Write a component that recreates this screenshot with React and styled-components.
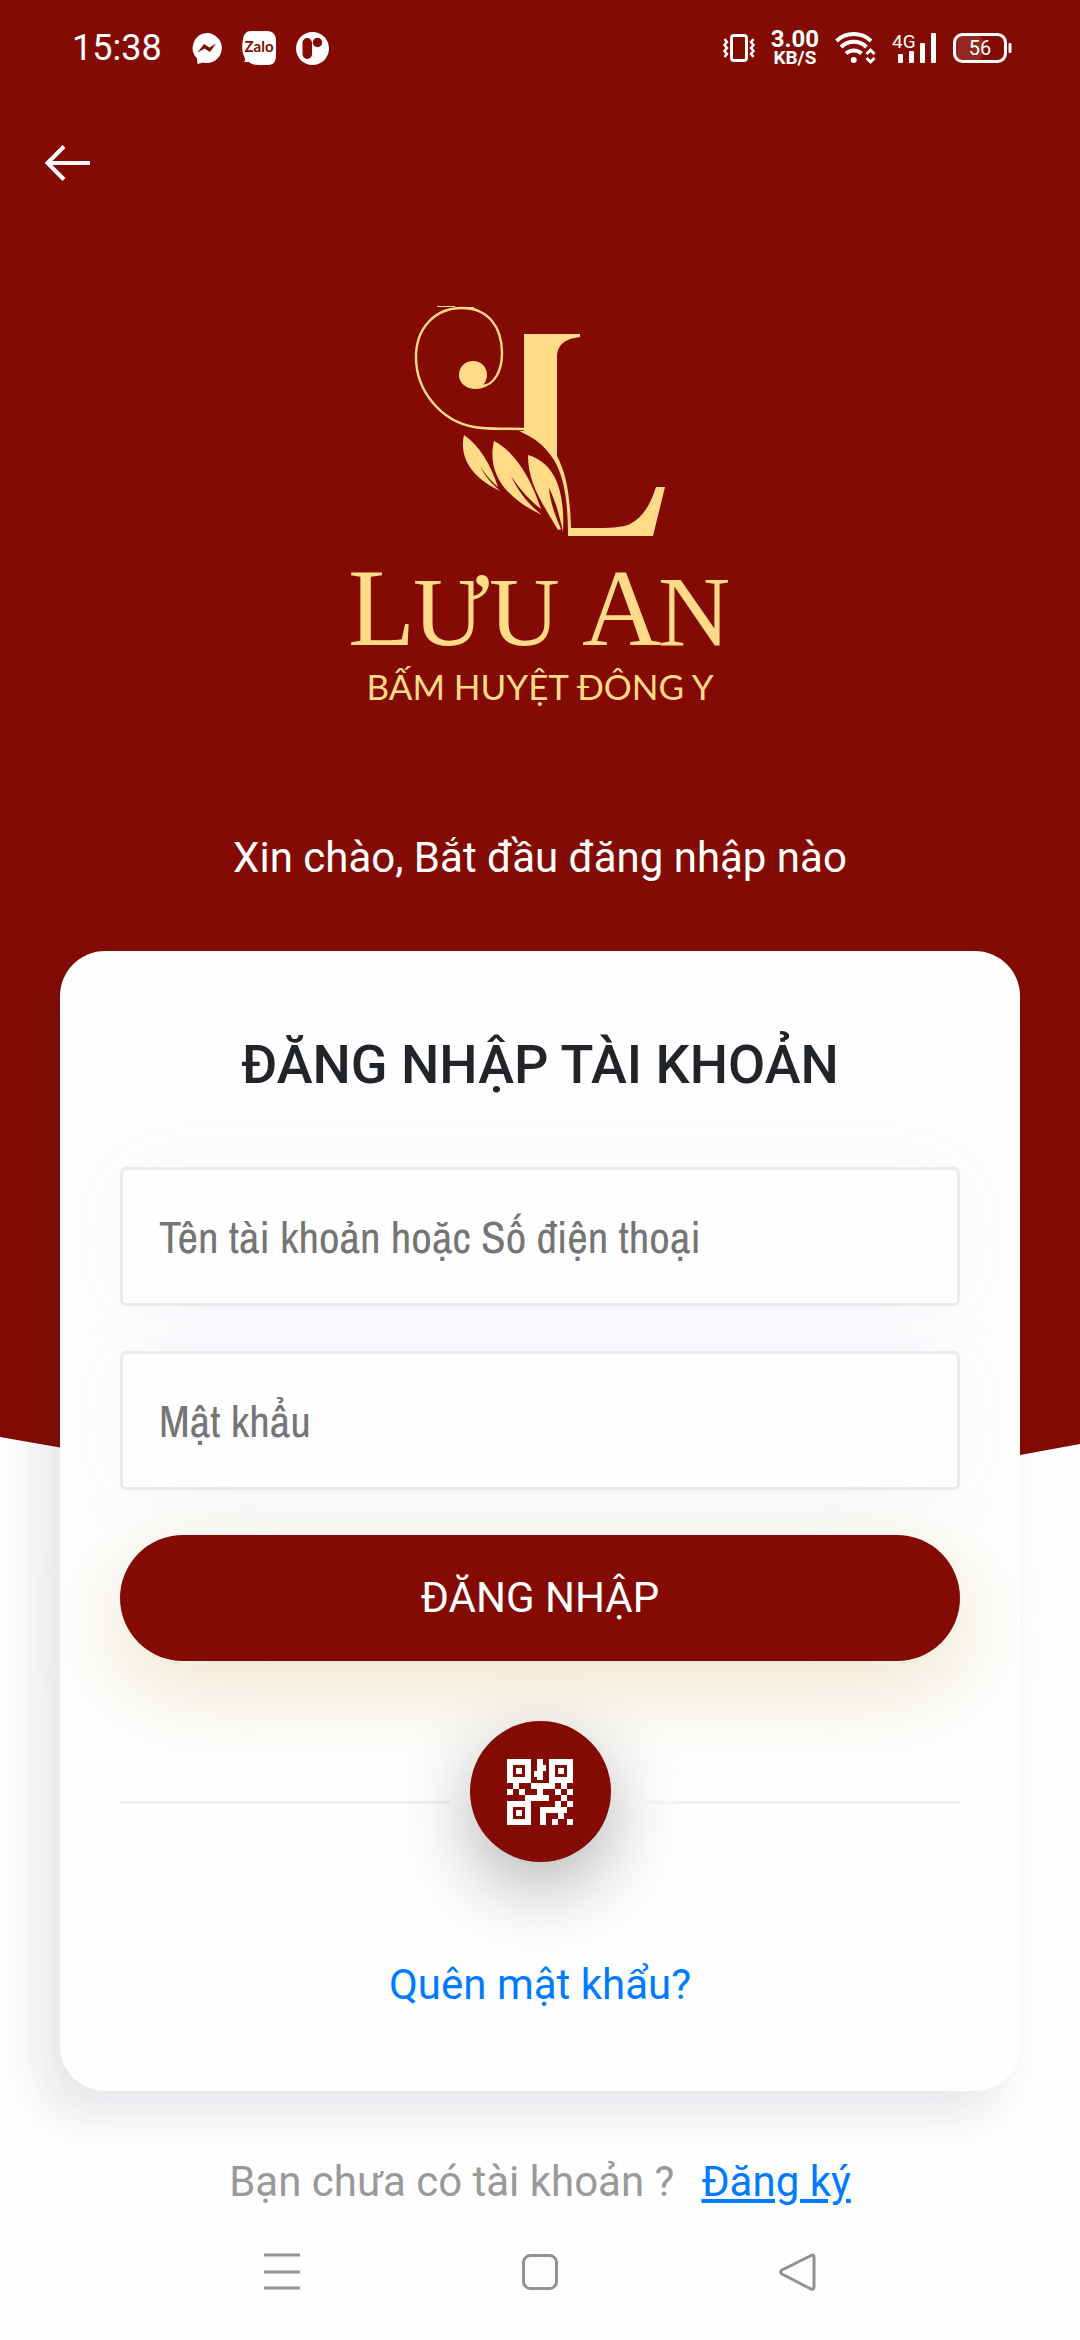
import React from "react";
import styled, { createGlobalStyle } from "styled-components";

const RED = "#830b03";
const GOLD = "#ffdb88";
const BLUE = "#007bff";

const GlobalStyle = createGlobalStyle`
  *, *::before, *::after { box-sizing: border-box; }
  body {
    margin: 0;
    background: #fefefe;
    font-family: Roboto, "Noto Sans", sans-serif;
    color: #212529;
  }
  svg { overflow: visible; }
`;

const Screen = styled.div`
  position: relative;
  z-index: 0;
  min-height: 100vh;
  display: flex;
  flex-direction: column;

  &::before {
    content: "";
    position: absolute;
    z-index: -1;
    inset: 0 0 auto;
    height: 1550px;
    background: ${RED};
    clip-path: polygon(0 0, 100% 0, 100% 1444px, 53% 1537px, 0 1437px);
  }
`;

const StatusBar = styled.div`
  display: flex;
  justify-content: space-between;
  align-items: center;
  height: 96px;
  padding: 0 68px 0 72px;
  color: #fff;
`;

const StatusGroup = styled.div`
  display: flex;
  align-items: center;
  gap: ${(p) => p.$gap}px;
`;

const Clock = styled.time`
  font-size: 36px;
  line-height: 40px;
  margin-right: 10px;
`;

const Speed = styled.div`
  display: flex;
  flex-direction: column;
  align-items: center;
  font-weight: 700;
  font-size: 24px;
  line-height: 20px;
`;

const SpeedUnit = styled.span`
  font-size: 19px;
  line-height: 18px;
`;

const TopBar = styled.header`
  display: flex;
  height: 136px;
  padding: 37px 30px;
`;

const BackButton = styled.button`
  display: flex;
  padding: 12px 15px;
  border: 0;
  background: none;
  height: 60px;
`;

const Brand = styled.div`
  display: flex;
  flex-direction: column;
  align-items: center;
  padding-top: 73px;
  color: ${GOLD};
`;

const Tagline = styled.div`
  font-family: Lato, "Noto Sans", sans-serif;
  font-size: 35px;
  line-height: 48px;
`;

const Greeting = styled.p`
  margin: 121px 0 66px;
  text-align: center;
  font-size: 42px;
  line-height: 54px;
  color: #fff;
`;

const Card = styled.form`
  display: flex;
  flex-direction: column;
  margin: 0 60px;
  padding: 81px 60px 79px;
  border-radius: 45px;
  background: #fefefe;
  box-shadow: -20px 24px 45px rgba(30, 45, 70, 0.11);
`;

const Title = styled.h1`
  margin: 0 0 69px;
  text-align: center;
  font-size: 54px;
  line-height: 66px;
  font-weight: 500;
`;

const Field = styled.input`
  width: 100%;
  height: 139px;
  margin-bottom: 45px;
  padding: 0 36px;
  border: 3px solid #ebebeb;
  border-radius: 6px;
  background: #fefefe;
  box-shadow: 0 0 90px rgba(105, 90, 220, 0.05);
  font-family: "Archivo Narrow", "Liberation Sans Narrow", "Roboto Condensed", Roboto, sans-serif;
  font-size: 45px;
  color: #212529;

  &::placeholder { color: #757575; opacity: 1; }
`;

const Submit = styled.button`
  height: 126px;
  border: 0;
  border-radius: 63px;
  background: ${RED};
  box-shadow: 0 24px 90px rgba(190, 150, 50, 0.26);
  color: #fff;
  font: 400 42px/54px Roboto, sans-serif;
`;

const QrRow = styled.div`
  display: flex;
  align-items: center;
  gap: 20px;
  margin-top: 60px;
`;

const Rule = styled.span`
  flex: 1;
  height: 3px;
  margin-top: 22px;
  background: #f2f2f2;
`;

const QrButton = styled.button`
  display: grid;
  place-items: center;
  width: 141px;
  height: 141px;
  padding: 0;
  border: 0;
  border-radius: 50%;
  background: ${RED};
  box-shadow: 0 24px 75px rgba(0, 0, 0, 0.3);
`;

const Link = styled.a`
  color: ${BLUE};
  text-decoration: ${(p) => (p.$underlined ? "underline" : "none")};
`;

const Forgot = styled.p`
  margin: 96px 0 0;
  text-align: center;
  font-size: 42px;
  line-height: 54px;
`;

const SignUp = styled.p`
  display: flex;
  justify-content: center;
  gap: 27px;
  margin: 64px 0 0;
  font-size: 42px;
  line-height: 54px;
  color: #999;
`;

const NavBar = styled.nav`
  display: flex;
  justify-content: center;
  gap: 216px;
  margin-top: 42px;
  padding-bottom: 42px;
`;

const NavButton = styled.button`
  display: flex;
  padding: 0;
  border: 0;
  background: none;
`;

function Emblem() {
  return (
    <svg width="252" height="232" viewBox="94 15 252 232" fill={GOLD} aria-hidden="true">
      <path d="M204 44h56v3c-16 2-23 8-23 21v98c9 17 13 38 14 72 24 0 49 1 59-4 12-6 20-18 26-37h9l-12 49h-85c0-36-4-59-14-76-10-15-19-22-35-29h5z" />
      <path d="M204 139c-21-1-33 1-50-2-33-6-58-36-58-70 0-28 18-49 46-49 26 0 40 19 40 45 0 18-8 33-21 33" fill="none" stroke={GOLD} strokeWidth="2.4" />
      <path d="M117 16.500h18M140 17.500h14" stroke={GOLD} strokeWidth="1" />
      <path d="M167 85c0 4-2 8-4 10 4 0 7-2 9-4-4 5-9 8-16 8-10 0-17-6-17-14s6-14 14-14 14 6 14 14z" />
      <path d="M144 145c15 10 27 30 34 52-6-5-13-13-18-21 5 10 12 18 20 25-29-14-41-34-36-56z" />
      <path d="M174 151c20 10 36 35 47 68-13-10-22-21-30-33 7 15 17 28 31 39-39-18-55-44-48-74z" />
      <path d="M208 165c27 8 37 35 35 77-4-19-8-32-14-44 1 14 6 27 12 41l-3 1c-17-29-30-47-30-75z" />
    </svg>
  );
}

function Wordmark() {
  return (
    <svg width="408" height="125" viewBox="0 0 408 125" fill={GOLD} fontFamily="'Liberation Serif', serif" role="img" aria-label="Lưu An">
      <text x="12" y="108" fontSize="110">L</text>
      <text x="77" y="108" fontSize="98">ƯU</text>
      <text x="246" y="108" fontSize="110">A</text>
      <text x="322" y="108" fontSize="100">N</text>
    </svg>
  );
}

const MessengerIcon = () => (
  <svg width="30" height="32" viewBox="0 0 30 32">
    <path fill="#fff" d="M15 1a15 15 0 1 1-4 29.500L5.500 32 5 26.500A15 15 0 0 1 15 1z" />
    <path fill={RED} d="M5.500 20.500L12 12l5.500 3.500L24 11.500 18 20l-5.500-3.500z" />
  </svg>
);

const ZaloIcon = () => (
  <svg width="34" height="34" viewBox="0 0 34 34">
    <path fill="#fff" d="M9 0h16c6 0 9 4 9 10v14c0 6-2 10-8 10H16c-4 0-7-1-9-3l-5 0c2-2 1-3 0-6C-.5 20 0 14 1 8 2 3 4 0 9 0z" />
    <text x="17" y="21" textAnchor="middle" fontFamily="Lato, sans-serif" fontWeight="700" fontSize="15" fill={RED}>Zalo</text>
  </svg>
);

const RIcon = () => (
  <svg width="33" height="33" viewBox="0 0 33 33">
    <circle cx="16.500" cy="16.500" r="16.500" fill="#fff" />
    <rect x="6.500" y="6" width="9.500" height="21" rx="4.700" fill={RED} />
    <circle cx="21.500" cy="10.500" r="4.700" fill={RED} />
  </svg>
);

const VibrateIcon = () => (
  <svg width="32" height="30" viewBox="0 0 32 30" fill="none" stroke="#fff">
    <rect x="8.500" y="2.500" width="15" height="25" rx="2.500" strokeWidth="3" />
    <path d="M1.500 6l2.500 3-2.500 3 2.500 3-2.500 3 2.500 3-2.500 3M30.500 6L28 9l2.500 3-2.500 3 2.500 3-2.500 3 2.500 3" strokeWidth="2.500" />
  </svg>
);

const WifiIcon = () => (
  <svg width="41" height="32" viewBox="0 0 41 32" fill="none" stroke="#fff" strokeWidth="4">
    <path d="M1.500 9a25 25 0 0 1 34.500 0M6 15a18 18 0 0 1 25.500 0M11 21.500a11.500 11.500 0 0 1 15.500 0" />
    <circle cx="18.700" cy="28" r="3" fill="#fff" stroke="none" />
    <path d="M31.500 22l4-4 4 4M31.500 26l4 4 4-4" strokeWidth="3" />
  </svg>
);

const SignalIcon = () => (
  <svg width="45" height="32" viewBox="0 0 45 32" fill="#fff">
    <text x="0" y="16" fontFamily="Roboto, sans-serif" fontSize="19">4G</text>
    <rect x="6" y="22" width="5" height="9" rx="1" />
    <rect x="17" y="19" width="5" height="12" rx="1" />
    <rect x="28" y="11" width="5" height="20" rx="1" />
    <rect x="39" y="1" width="5" height="30" rx="1" />
  </svg>
);

const BatteryIcon = () => (
  <svg width="59" height="30" viewBox="0 0 59 30">
    <rect x="3" y="3" width="27" height="24" rx="5" fill="#fff" opacity=".12" />
    <rect x="1.500" y="1.500" width="51" height="27" rx="8" fill="none" stroke="#fff" strokeWidth="3" />
    <rect x="55.500" y="10" width="3" height="10" rx="1" fill="#fff" />
    <text x="27" y="22" textAnchor="middle" fontFamily="Roboto, sans-serif" fontSize="20" fill="#fff">56</text>
  </svg>
);

const BackArrow = () => (
  <svg width="46" height="36" viewBox="0 0 46 36" fill="none" stroke="#fff" strokeWidth="4">
    <path d="M45 18H3M19 1.500L2.500 18 19 34.500" />
  </svg>
);

const QrIcon = () => (
  <svg width="66" height="66" viewBox="0 0 66 66" fill="#fff" shapeRendering="crispEdges">
    <path fillRule="evenodd" d="M0 0h24v24H0zM6 6v12h12V6zM9 9h6v6H9zM42 0h24v24H42zM48 6v12h12V6zM51 9h6v6h-6zM0 42h24v24H0zM6 48v12h12V48zM9 51h6v6H9z" />
    <path d="M30 0h6v6h3v6h-3v9h-6v-3h-3v-6h3z" />
    <path d="M6 24h6v6H6zM0 30h6v6H0zM12 30h6v6h-6zM24 24h24v6H36v6h6v6H18v-6h12v-6h-6zM54 24h6v6h-6zM48 30h6v6h-6zM60 30h6v6h-6zM54 36h6v6h-6zM60 42h6v6h-6zM48 42h6v6h-6zM33 48h27v6h-3v6h-6v-6H39v12h-6zM45 60h6v6h-6zM60 60h6v6h-6z" />
  </svg>
);

export default function App() {
  return (
    <>
      <GlobalStyle />
      <Screen>
        <StatusBar>
          <StatusGroup $gap={20}>
            <Clock>15:38</Clock>
            <MessengerIcon />
            <ZaloIcon />
            <RIcon />
          </StatusGroup>
          <StatusGroup $gap={16}>
            <VibrateIcon />
            <Speed>
              3.00
              <SpeedUnit>KB/S</SpeedUnit>
            </Speed>
            <WifiIcon />
            <SignalIcon />
            <BatteryIcon />
          </StatusGroup>
        </StatusBar>
        <TopBar>
          <BackButton type="button" aria-label="Quay lại"><BackArrow /></BackButton>
        </TopBar>
        <Brand>
          <Emblem />
          <Wordmark />
          <Tagline>BẤM HUYỆT ĐÔNG Y</Tagline>
        </Brand>
        <Greeting>Xin chào, Bắt đầu đăng nhập nào</Greeting>
        <Card onSubmit={(e) => e.preventDefault()}>
          <Title>ĐĂNG NHẬP TÀI KHOẢN</Title>
          <Field type="text" aria-label="Tên tài khoản hoặc Số điện thoại" placeholder="Tên tài khoản hoặc Số điện thoại" />
          <Field type="password" aria-label="Mật khẩu" placeholder="Mật khẩu" />
          <Submit type="submit">ĐĂNG NHẬP</Submit>
          <QrRow>
            <Rule />
            <QrButton type="button" aria-label="Quét mã QR"><QrIcon /></QrButton>
            <Rule />
          </QrRow>
          <Forgot><Link href="#forgot">Quên mật khẩu?</Link></Forgot>
        </Card>
        <SignUp>
          <span>Bạn chưa có tài khoản ?</span>
          <Link href="#register" $underlined>Đăng ký</Link>
        </SignUp>
        <NavBar>
          <NavButton type="button" aria-label="Ứng dụng gần đây">
            <svg width="42" height="42" viewBox="0 0 42 42" stroke="#929292" strokeWidth="3"><path d="M3 4h36M3 21h36M3 37h36" /></svg>
          </NavButton>
          <NavButton type="button" aria-label="Trang chủ">
            <svg width="42" height="42" viewBox="0 0 42 42" fill="none" stroke="#929292" strokeWidth="3"><rect x="4.500" y="4.500" width="33" height="33" rx="7" /></svg>
          </NavButton>
          <NavButton type="button" aria-label="Trở lại">
            <svg width="42" height="42" viewBox="0 0 42 42" fill="none" stroke="#929292" strokeWidth="3" strokeLinejoin="round"><path d="M34 4.500L5 19q-3 2 0 4l29 15q3 1 3-2V6q0-3-3-1.500z" /></svg>
          </NavButton>
        </NavBar>
      </Screen>
    </>
  );
}
